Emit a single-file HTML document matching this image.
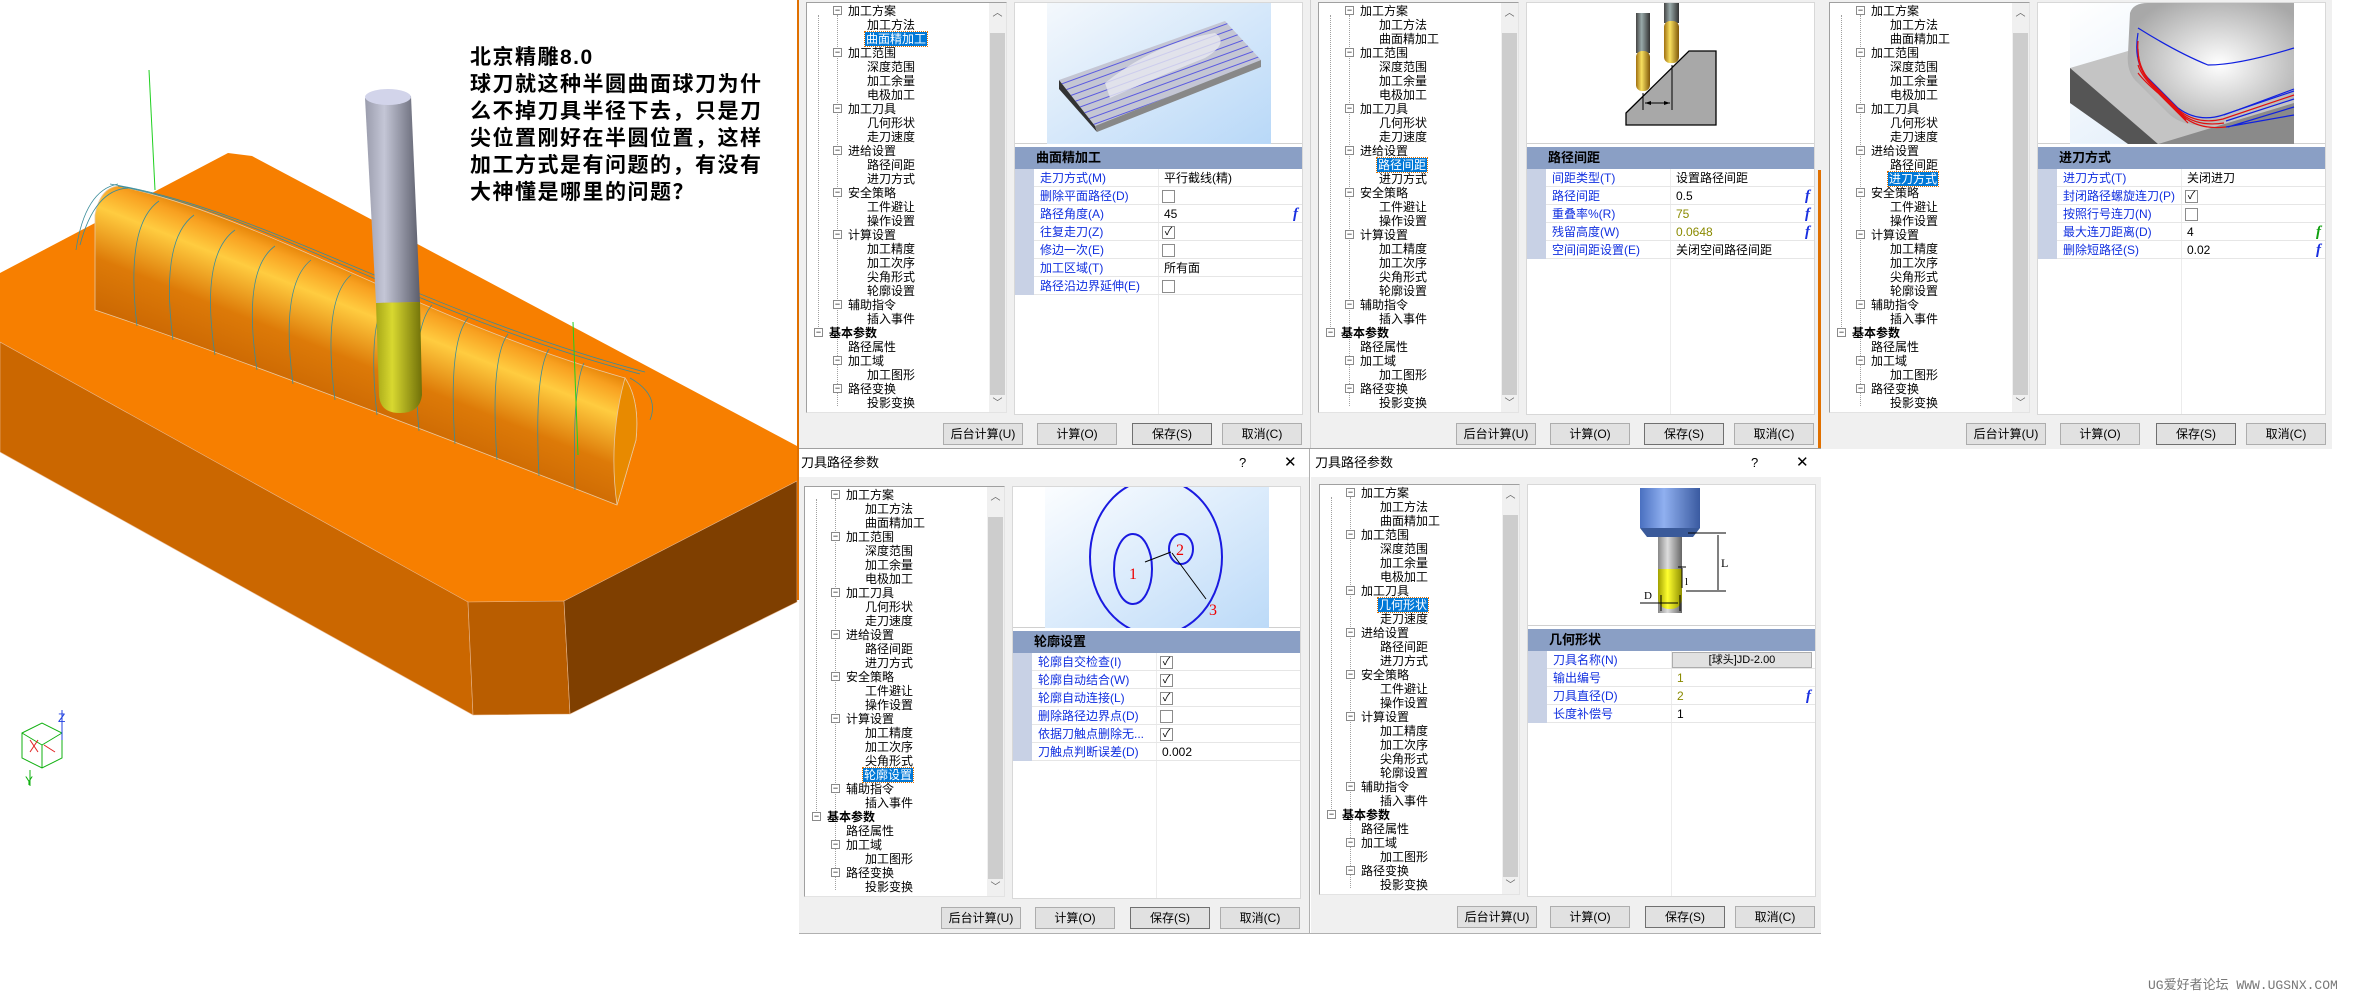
<!DOCTYPE html>
<html><head><meta charset="utf-8">
<style>
*{margin:0;padding:0;box-sizing:border-box}
body{width:2362px;height:993px;background:#fff;position:relative;overflow:hidden;font-family:"Liberation Sans","Noto Sans CJK SC","WenQuanYi Zen Hei",sans-serif;}
.abs{position:absolute}
.bg{position:absolute;background:#f0f0f0}
.dlg{position:absolute;width:512px;height:450px}
.tree{position:absolute;left:8px;top:2px;width:201px;height:411px;background:#fff;border:1px solid #a0a0a0;border-right-color:#e3e3e3;border-bottom-color:#e3e3e3;overflow:hidden;font-size:12px;line-height:14px;color:#000}
.tree .it{position:absolute;white-space:nowrap;height:14px}
.tree .bx{position:absolute;width:9px;height:9px;border:1px solid #8a8a8a;background:#fff;font-size:9px;line-height:7px;text-align:center;color:#000}
.tree .sel{background:#0078d7;color:#fff;outline:1px dotted #e07000;padding:0 1px}
.vl{position:absolute;border-left:1px dotted #a0a0a0}
.sb{position:absolute;right:0;top:0;width:17px;height:409px;background:#f0f0f0}
.sb .th{position:absolute;left:1px;top:30px;width:15px;height:362px;background:#cdcdcd}
.sb .ar{position:absolute;left:0;width:17px;text-align:center;font-size:10px;color:#606060}
.panel{position:absolute;left:216px;top:2px;width:289px;height:413px;background:#fff;border:1px solid #d8d8d8}
.img{position:absolute;left:0;top:0;width:287px;height:141px;border-bottom:1px solid #d0d0d0}
.hdr{position:absolute;left:0;top:144px;width:287px;height:22px;background:#8a9fc5;font-weight:bold;font-size:13px;line-height:22px;padding-left:21px;color:#000}
.gut{position:absolute;left:0;top:166px;width:19px;background:#c8d1e5}
.row{position:absolute;left:19px;width:268px;height:18px;border-bottom:1px solid #e6e6e6;font-size:12px;line-height:18px}
.row .l{position:absolute;left:6px;color:#1230e0;white-space:nowrap;overflow:hidden;width:118px}
.row .v{position:absolute;left:130px;color:#000;white-space:nowrap}
.vc{position:absolute;left:143px;top:166px;width:1px;height:245px;background:#ececec}
.cb{position:absolute;left:128px;top:3px;width:13px;height:13px;border:1px solid #8c8c8c;background:#fff;font-size:11px;line-height:11px;text-align:center}
.fx{position:absolute;right:4px;top:0;color:#1a30e0;font-style:italic;font-weight:bold;font-size:15px;font-family:"Liberation Serif",serif}
.btn{position:absolute;top:423px;width:80px;height:22px;background:#e1e1e1;border:1px solid #adadad;font-size:12px;line-height:20px;text-align:center;color:#000}
.title{position:absolute;height:28px;background:#fff;font-size:13px;line-height:28px}
</style></head><body>

<!-- 3D viewport -->
<svg class="abs" style="left:0;top:0" width="798" height="993" viewBox="0 0 798 993">
<defs>
<linearGradient id="rg" gradientUnits="userSpaceOnUse" x1="330" y1="430" x2="390" y2="280">
<stop offset="0" stop-color="#c46000"/><stop offset="0.45" stop-color="#dd7a08"/><stop offset="0.75" stop-color="#ffcc40"/><stop offset="0.9" stop-color="#f8a020"/><stop offset="1" stop-color="#e07c00"/></linearGradient>
<linearGradient id="tg" x1="0" x2="1"><stop offset="0" stop-color="#9a9cac"/><stop offset="0.35" stop-color="#c4c6d6"/><stop offset="1" stop-color="#5c5e6c"/></linearGradient>
<linearGradient id="yg" x1="0" x2="1"><stop offset="0" stop-color="#a8a818"/><stop offset="0.35" stop-color="#d8d830"/><stop offset="1" stop-color="#707008"/></linearGradient>
</defs>
<polygon points="0,273 228,153 252,156 797,446 797,481 564,601 468,602 0,342" fill="#f77f00"/>
<polygon points="0,342 468,602 473,715 0,452" fill="#cb6700" stroke="#e8b890" stroke-width="0.6"/>
<polygon points="468,602 564,601 570,714 473,715" fill="#b95d00" stroke="#e8b890" stroke-width="0.6"/>
<polygon points="564,601 797,481 797,602 570,714" fill="#7f3f00" stroke="#e8b890" stroke-width="0.6"/>
<path d="M95,310 L95,215 Q100,188 118,186 C260,215 420,320 625,378 Q640,400 636,440 L617,505 C400,420 200,345 95,310 Z" fill="url(#rg)" stroke="#e8c8a0" stroke-width="0.8"/>
<path d="M625,378 Q640,400 636,440 L617,505 Q608,440 625,378Z" fill="#e88a00" stroke="#e8c8a0" stroke-width="0.8"/>
<g fill="none" stroke="#3a8c9a" stroke-width="0.8">
<path d="M118,186 C260,212 420,316 640,374"/>
<path d="M110,184 C260,208 420,312 645,372"/>
<path d="M76,250 Q85,190 118,184"/><path d="M80,245 Q95,188 130,188"/>
<path d="M137,326 Q125,225 159,201"/><path d="M173,340 Q160,240 194,215"/>
<path d="M215,355 Q200,255 235,230"/><path d="M257,370 Q242,270 275,246"/>
<path d="M293,384 Q280,285 311,260"/><path d="M335,400 Q322,300 351,275"/>
<path d="M377,415 Q366,315 392,290"/><path d="M419,431 Q410,330 432,305"/>
<path d="M455,444 Q448,342 468,318"/><path d="M497,460 Q490,358 508,334"/>
<path d="M539,476 Q534,374 549,349"/><path d="M575,490 Q572,388 584,363"/>
<path d="M630,378 Q660,395 650,420"/>
</g>
<line x1="149" y1="70" x2="155" y2="190" stroke="#20d020" stroke-width="1"/>
<line x1="573" y1="322" x2="578" y2="455" stroke="#20d020" stroke-width="1"/>
<polygon points="365,98 411,96 420,302 376,303" fill="url(#tg)"/>
<ellipse cx="388" cy="97" rx="23" ry="8" fill="#d2d4ea"/>
<path d="M376,303 L420,302 L422,395 Q420,413 400,413 Q380,413 379,395 Z" fill="url(#yg)"/>
<g stroke="#10b010" fill="none" stroke-width="1"><polygon points="22,733 42,723 62,733 62,758 42,768 22,758"/><line x1="42" y1="745" x2="42" y2="768"/><line x1="22" y1="733" x2="42" y2="745"/><line x1="62" y1="733" x2="42" y2="745"/><line x1="30" y1="770" x2="30" y2="786"/></g>
<g stroke="#e02020" stroke-width="1"><line x1="30" y1="740" x2="38" y2="752"/><line x1="38" y1="740" x2="30" y2="752"/><line x1="44" y1="745" x2="55" y2="752"/></g>
<line x1="62" y1="710" x2="62" y2="740" stroke="#2040e0"/>
<text x="58" y="722" font-size="12" fill="#2040e0" font-family="Liberation Sans">Z</text>
<text x="25" y="785" font-size="12" fill="#10b010" font-family="Liberation Sans">Y</text>
</svg>
<div class="abs" style="left:470px;top:44px;font-size:21px;line-height:27px;font-weight:bold;letter-spacing:1.5px;color:#000;font-family:'Liberation Sans','Noto Sans CJK SC',sans-serif">北京精雕8.0<br>球刀就这种半圆曲面球刀为什<br>么不掉刀具半径下去，只是刀<br>尖位置刚好在半圆位置，这样<br>加工方式是有问题的，有没有<br>大神懂是哪里的问题？</div>
<div class="abs" style="left:797px;top:0;width:2px;height:600px;background:#e07000"></div>

<!-- backgrounds -->
<div class="bg" style="left:799px;top:0;width:1533px;height:449px"></div>
<div class="abs" style="left:1310px;top:0;width:1px;height:449px;background:#d0d0d0"></div>
<div class="abs" style="left:1818px;top:170px;width:3px;height:282px;background:#e07000"></div>
<div class="abs" style="left:799px;top:448px;width:1022px;height:1px;background:#a0a0a0"></div>
<div class="bg" style="left:799px;top:476px;width:510px;height:458px"></div>
<div class="bg" style="left:1311px;top:476px;width:510px;height:458px"></div>
<div class="title" style="left:799px;top:449px;width:510px;padding-left:2px">刀具路径参数<span class="abs" style="left:440px">?</span><span class="abs" style="left:485px;font-size:15px">✕</span></div>
<div class="title" style="left:1311px;top:449px;width:510px;padding-left:4px">刀具路径参数<span class="abs" style="left:440px">?</span><span class="abs" style="left:485px;font-size:15px">✕</span></div>
<div class="abs" style="left:1309px;top:449px;width:1px;height:485px;background:#b0b0b0"></div>
<div class="abs" style="left:799px;top:933px;width:1022px;height:1px;background:#b0b0b0"></div>

<!-- DIALOG TEMPLATE X5 -->
<!-- D1 -->
<div class="dlg" style="left:798px;top:0">
<div class="tree">
<div class="vl" style="left:30px;top:12px;height:310px"></div><div class="vl" style="left:11px;top:12px;height:320px"></div><div class="vl" style="left:30px;top:333px;height:70px"></div>
<div class="bx" style="left:26px;top:3px">−</div><div class="it" style="left:41px;top:1px">加工方案</div>
<div class="it" style="left:60px;top:15px">加工方法</div>
<div class="it sel" style="left:58px;top:29px">曲面精加工</div>
<div class="bx" style="left:26px;top:45px">−</div><div class="it" style="left:41px;top:43px">加工范围</div>
<div class="it" style="left:60px;top:57px">深度范围</div>
<div class="it" style="left:60px;top:71px">加工余量</div>
<div class="it" style="left:60px;top:85px">电极加工</div>
<div class="bx" style="left:26px;top:101px">−</div><div class="it" style="left:41px;top:99px">加工刀具</div>
<div class="it" style="left:60px;top:113px">几何形状</div>
<div class="it" style="left:60px;top:127px">走刀速度</div>
<div class="bx" style="left:26px;top:143px">−</div><div class="it" style="left:41px;top:141px">进给设置</div>
<div class="it" style="left:60px;top:155px">路径间距</div>
<div class="it" style="left:60px;top:169px">进刀方式</div>
<div class="bx" style="left:26px;top:185px">−</div><div class="it" style="left:41px;top:183px">安全策略</div>
<div class="it" style="left:60px;top:197px">工件避让</div>
<div class="it" style="left:60px;top:211px">操作设置</div>
<div class="bx" style="left:26px;top:227px">−</div><div class="it" style="left:41px;top:225px">计算设置</div>
<div class="it" style="left:60px;top:239px">加工精度</div>
<div class="it" style="left:60px;top:253px">加工次序</div>
<div class="it" style="left:60px;top:267px">尖角形式</div>
<div class="it" style="left:60px;top:281px">轮廓设置</div>
<div class="bx" style="left:26px;top:297px">−</div><div class="it" style="left:41px;top:295px">辅助指令</div>
<div class="it" style="left:60px;top:309px">插入事件</div>
<div class="bx" style="left:7px;top:325px">−</div><div class="it" style="left:22px;top:323px;font-weight:bold">基本参数</div>
<div class="it" style="left:41px;top:337px">路径属性</div>
<div class="bx" style="left:26px;top:353px">−</div><div class="it" style="left:41px;top:351px">加工域</div>
<div class="it" style="left:60px;top:365px">加工图形</div>
<div class="bx" style="left:26px;top:381px">−</div><div class="it" style="left:41px;top:379px">路径变换</div>
<div class="it" style="left:60px;top:393px">投影变换</div>
<div class="sb"><div class="ar" style="top:4px">︿</div><div class="th"></div><div class="ar" style="top:394px">﹀</div></div>
</div>
<div class="panel">
<div class="img"><svg width="287" height="141"><defs><linearGradient id="lb1" x1="0" y1="0" x2="1" y2="1"><stop offset="0" stop-color="#f4f8fc"/><stop offset="1" stop-color="#b8d8f8"/></linearGradient><pattern id="st" width="7" height="7" patternUnits="userSpaceOnUse" patternTransform="rotate(-20)"><rect width="7" height="7" fill="#c4c6d4"/><line x1="0" y1="1" x2="7" y2="1" stroke="#5a5ae0" stroke-width="1"/></pattern></defs><rect x="32" y="0" width="224" height="141" fill="url(#lb1)"/><polygon points="44,77 210,18 246,57 80,123" fill="url(#st)"/><polygon points="44,77 80,123 82,129 44,86" fill="#333"/><polygon points="80,123 246,57 246,64 82,129" fill="#888"/><path d="M90,80 Q140,40 200,30 Q215,40 190,55 Q140,75 95,95Z" fill="#e8e8f0" opacity="0.8"/></svg></div>
<div class="hdr">曲面精加工</div>
<div class="gut" style="height:126px"></div><div class="vc"></div>
<div class="row" style="top:166px"><span class="l">走刀方式(M)</span><span class="v">平行截线(精)</span></div>
<div class="row" style="top:184px"><span class="l">删除平面路径(D)</span><span class="cb"></span></div>
<div class="row" style="top:202px"><span class="l">路径角度(A)</span><span class="v">45</span><span class="fx">f</span></div>
<div class="row" style="top:220px"><span class="l">往复走刀(Z)</span><span class="cb">✓</span></div>
<div class="row" style="top:238px"><span class="l">修边一次(E)</span><span class="cb"></span></div>
<div class="row" style="top:256px"><span class="l">加工区域(T)</span><span class="v">所有面</span></div>
<div class="row" style="top:274px"><span class="l">路径沿边界延伸(E)</span><span class="cb"></span></div>
</div>
<div class="btn" style="left:145px">后台计算(U)</div><div class="btn" style="left:239px">计算(O)</div><div class="btn" style="left:334px;border-color:#707070">保存(S)</div><div class="btn" style="left:424px">取消(C)</div>
</div>

<!-- D2 -->
<div class="dlg" style="left:1310px;top:0">
<div class="tree">
<div class="vl" style="left:30px;top:12px;height:310px"></div><div class="vl" style="left:11px;top:12px;height:320px"></div><div class="vl" style="left:30px;top:333px;height:70px"></div>
<div class="bx" style="left:26px;top:3px">−</div><div class="it" style="left:41px;top:1px">加工方案</div>
<div class="it" style="left:60px;top:15px">加工方法</div>
<div class="it" style="left:60px;top:29px">曲面精加工</div>
<div class="bx" style="left:26px;top:45px">−</div><div class="it" style="left:41px;top:43px">加工范围</div>
<div class="it" style="left:60px;top:57px">深度范围</div>
<div class="it" style="left:60px;top:71px">加工余量</div>
<div class="it" style="left:60px;top:85px">电极加工</div>
<div class="bx" style="left:26px;top:101px">−</div><div class="it" style="left:41px;top:99px">加工刀具</div>
<div class="it" style="left:60px;top:113px">几何形状</div>
<div class="it" style="left:60px;top:127px">走刀速度</div>
<div class="bx" style="left:26px;top:143px">−</div><div class="it" style="left:41px;top:141px">进给设置</div>
<div class="it sel" style="left:58px;top:155px">路径间距</div>
<div class="it" style="left:60px;top:169px">进刀方式</div>
<div class="bx" style="left:26px;top:185px">−</div><div class="it" style="left:41px;top:183px">安全策略</div>
<div class="it" style="left:60px;top:197px">工件避让</div>
<div class="it" style="left:60px;top:211px">操作设置</div>
<div class="bx" style="left:26px;top:227px">−</div><div class="it" style="left:41px;top:225px">计算设置</div>
<div class="it" style="left:60px;top:239px">加工精度</div>
<div class="it" style="left:60px;top:253px">加工次序</div>
<div class="it" style="left:60px;top:267px">尖角形式</div>
<div class="it" style="left:60px;top:281px">轮廓设置</div>
<div class="bx" style="left:26px;top:297px">−</div><div class="it" style="left:41px;top:295px">辅助指令</div>
<div class="it" style="left:60px;top:309px">插入事件</div>
<div class="bx" style="left:7px;top:325px">−</div><div class="it" style="left:22px;top:323px;font-weight:bold">基本参数</div>
<div class="it" style="left:41px;top:337px">路径属性</div>
<div class="bx" style="left:26px;top:353px">−</div><div class="it" style="left:41px;top:351px">加工域</div>
<div class="it" style="left:60px;top:365px">加工图形</div>
<div class="bx" style="left:26px;top:381px">−</div><div class="it" style="left:41px;top:379px">路径变换</div>
<div class="it" style="left:60px;top:393px">投影变换</div>
<div class="sb"><div class="ar" style="top:4px">︿</div><div class="th"></div><div class="ar" style="top:394px">﹀</div></div>
</div>
<div class="panel">
<div class="img"><svg width="287" height="141"><defs><linearGradient id="em" x1="0" x2="1"><stop offset="0" stop-color="#444"/><stop offset="0.4" stop-color="#9aa"/><stop offset="1" stop-color="#333"/></linearGradient><linearGradient id="gd" x1="0" x2="1"><stop offset="0" stop-color="#a07010"/><stop offset="0.4" stop-color="#f8e060"/><stop offset="1" stop-color="#805808"/></linearGradient></defs><polygon points="99,110 162,48 189,48 189,122 99,122" fill="#a8a8a8" stroke="#000" stroke-width="1.3"/><rect x="109" y="10" width="14" height="40" fill="url(#em)"/><rect x="109" y="48" width="14" height="40" rx="6" fill="url(#gd)"/><rect x="137" y="-2" width="15" height="22" fill="url(#em)"/><rect x="137" y="18" width="15" height="42" rx="6" fill="url(#gd)"/><line x1="116" y1="90" x2="116" y2="107" stroke="#000"/><line x1="145" y1="62" x2="145" y2="107" stroke="#000"/><line x1="118" y1="100" x2="143" y2="100" stroke="#000"/><polygon points="118,100 124,98 124,102" fill="#000"/><polygon points="143,100 137,98 137,102" fill="#000"/></svg></div>
<div class="hdr">路径间距</div>
<div class="gut" style="height:90px"></div><div class="vc"></div>
<div class="row" style="top:166px"><span class="l">间距类型(T)</span><span class="v">设置路径间距</span></div>
<div class="row" style="top:184px"><span class="l">路径间距</span><span class="v">0.5</span><span class="fx">f</span></div>
<div class="row" style="top:202px"><span class="l">重叠率%(R)</span><span class="v" style="color:#8a8a00">75</span><span class="fx">f</span></div>
<div class="row" style="top:220px"><span class="l">残留高度(W)</span><span class="v" style="color:#8a8a00">0.0648</span><span class="fx">f</span></div>
<div class="row" style="top:238px"><span class="l">空间间距设置(E)</span><span class="v">关闭空间路径间距</span></div>
</div>
<div class="btn" style="left:146px">后台计算(U)</div><div class="btn" style="left:240px">计算(O)</div><div class="btn" style="left:334px;border-color:#707070">保存(S)</div><div class="btn" style="left:424px">取消(C)</div>
</div>

<!-- D3 -->
<div class="dlg" style="left:1821px;top:0">
<div class="tree">
<div class="vl" style="left:30px;top:12px;height:310px"></div><div class="vl" style="left:11px;top:12px;height:320px"></div><div class="vl" style="left:30px;top:333px;height:70px"></div>
<div class="bx" style="left:26px;top:3px">−</div><div class="it" style="left:41px;top:1px">加工方案</div>
<div class="it" style="left:60px;top:15px">加工方法</div>
<div class="it" style="left:60px;top:29px">曲面精加工</div>
<div class="bx" style="left:26px;top:45px">−</div><div class="it" style="left:41px;top:43px">加工范围</div>
<div class="it" style="left:60px;top:57px">深度范围</div>
<div class="it" style="left:60px;top:71px">加工余量</div>
<div class="it" style="left:60px;top:85px">电极加工</div>
<div class="bx" style="left:26px;top:101px">−</div><div class="it" style="left:41px;top:99px">加工刀具</div>
<div class="it" style="left:60px;top:113px">几何形状</div>
<div class="it" style="left:60px;top:127px">走刀速度</div>
<div class="bx" style="left:26px;top:143px">−</div><div class="it" style="left:41px;top:141px">进给设置</div>
<div class="it" style="left:60px;top:155px">路径间距</div>
<div class="it sel" style="left:58px;top:169px">进刀方式</div>
<div class="bx" style="left:26px;top:185px">−</div><div class="it" style="left:41px;top:183px">安全策略</div>
<div class="it" style="left:60px;top:197px">工件避让</div>
<div class="it" style="left:60px;top:211px">操作设置</div>
<div class="bx" style="left:26px;top:227px">−</div><div class="it" style="left:41px;top:225px">计算设置</div>
<div class="it" style="left:60px;top:239px">加工精度</div>
<div class="it" style="left:60px;top:253px">加工次序</div>
<div class="it" style="left:60px;top:267px">尖角形式</div>
<div class="it" style="left:60px;top:281px">轮廓设置</div>
<div class="bx" style="left:26px;top:297px">−</div><div class="it" style="left:41px;top:295px">辅助指令</div>
<div class="it" style="left:60px;top:309px">插入事件</div>
<div class="bx" style="left:7px;top:325px">−</div><div class="it" style="left:22px;top:323px;font-weight:bold">基本参数</div>
<div class="it" style="left:41px;top:337px">路径属性</div>
<div class="bx" style="left:26px;top:353px">−</div><div class="it" style="left:41px;top:351px">加工域</div>
<div class="it" style="left:60px;top:365px">加工图形</div>
<div class="bx" style="left:26px;top:381px">−</div><div class="it" style="left:41px;top:379px">路径变换</div>
<div class="it" style="left:60px;top:393px">投影变换</div>
<div class="sb"><div class="ar" style="top:4px">︿</div><div class="th"></div><div class="ar" style="top:394px">﹀</div></div>
</div>
<div class="panel">
<div class="img"><svg width="287" height="141"><defs><linearGradient id="lb3" x1="0" y1="0" x2="1" y2="1"><stop offset="0" stop-color="#ffffff"/><stop offset="1" stop-color="#d8e8f8"/></linearGradient><radialGradient id="bm" cx="0.55" cy="0.5" r="0.6"><stop offset="0" stop-color="#fff"/><stop offset="1" stop-color="#a8a8a8"/></radialGradient></defs><rect x="32" y="0" width="224" height="141" fill="url(#lb3)"/><polygon points="32,65 90,48 256,20 256,141 120,141 32,100" fill="#c4c4c4"/><polygon points="32,65 120,141 90,141 32,100" fill="#555"/><polygon points="120,141 256,100 256,141" fill="#8a8a8a"/><path d="M92,10 Q95,0 110,0 L256,0 L256,95 Q200,115 175,122 Q145,125 130,110 L100,80 Q88,70 90,50Z" fill="url(#bm)"/><g fill="none" stroke-width="1.2"><path d="M100,30 Q95,60 110,75 L140,105 Q160,120 185,112 L256,88" stroke="#1020e0"/><path d="M100,38 Q98,62 112,78 L142,108 Q160,122 185,116 L256,92" stroke="#e01010"/><path d="M100,46 Q100,66 114,81 L144,111 Q160,124 186,120" stroke="#e01010"/><path d="M100,54 Q102,70 116,84 L146,114 Q162,127 188,124" stroke="#e01010"/><path d="M100,62 Q104,74 118,87 L148,117" stroke="#e01010"/><path d="M100,70 Q106,78 120,90 L150,120" stroke="#e01010"/><path d="M186,112 L256,86 M188,118 L256,96 M190,124 L256,104 M188,124 L256,112" stroke="#1020e0"/><path d="M100,25 Q140,50 170,62 Q200,62 256,45" stroke="#1020e0"/></g></svg></div>
<div class="hdr">进刀方式</div>
<div class="gut" style="height:90px"></div><div class="vc"></div>
<div class="row" style="top:166px"><span class="l">进刀方式(T)</span><span class="v">关闭进刀</span></div>
<div class="row" style="top:184px"><span class="l">封闭路径螺旋连刀(P)</span><span class="cb">✓</span></div>
<div class="row" style="top:202px"><span class="l">按照行号连刀(N)</span><span class="cb"></span></div>
<div class="row" style="top:220px"><span class="l">最大连刀距离(D)</span><span class="v">4</span><span class="fx" style="color:#10a010">f</span></div>
<div class="row" style="top:238px"><span class="l">删除短路径(S)</span><span class="v">0.02</span><span class="fx">f</span></div>
</div>
<div class="btn" style="left:145px">后台计算(U)</div><div class="btn" style="left:239px">计算(O)</div><div class="btn" style="left:335px;border-color:#707070">保存(S)</div><div class="btn" style="left:425px">取消(C)</div>
</div>

<!-- D4 -->
<div class="dlg" style="left:796px;top:484px">
<div class="tree">
<div class="vl" style="left:30px;top:12px;height:310px"></div><div class="vl" style="left:11px;top:12px;height:320px"></div><div class="vl" style="left:30px;top:333px;height:70px"></div>
<div class="bx" style="left:26px;top:3px">−</div><div class="it" style="left:41px;top:1px">加工方案</div>
<div class="it" style="left:60px;top:15px">加工方法</div>
<div class="it" style="left:60px;top:29px">曲面精加工</div>
<div class="bx" style="left:26px;top:45px">−</div><div class="it" style="left:41px;top:43px">加工范围</div>
<div class="it" style="left:60px;top:57px">深度范围</div>
<div class="it" style="left:60px;top:71px">加工余量</div>
<div class="it" style="left:60px;top:85px">电极加工</div>
<div class="bx" style="left:26px;top:101px">−</div><div class="it" style="left:41px;top:99px">加工刀具</div>
<div class="it" style="left:60px;top:113px">几何形状</div>
<div class="it" style="left:60px;top:127px">走刀速度</div>
<div class="bx" style="left:26px;top:143px">−</div><div class="it" style="left:41px;top:141px">进给设置</div>
<div class="it" style="left:60px;top:155px">路径间距</div>
<div class="it" style="left:60px;top:169px">进刀方式</div>
<div class="bx" style="left:26px;top:185px">−</div><div class="it" style="left:41px;top:183px">安全策略</div>
<div class="it" style="left:60px;top:197px">工件避让</div>
<div class="it" style="left:60px;top:211px">操作设置</div>
<div class="bx" style="left:26px;top:227px">−</div><div class="it" style="left:41px;top:225px">计算设置</div>
<div class="it" style="left:60px;top:239px">加工精度</div>
<div class="it" style="left:60px;top:253px">加工次序</div>
<div class="it" style="left:60px;top:267px">尖角形式</div>
<div class="it sel" style="left:58px;top:281px">轮廓设置</div>
<div class="bx" style="left:26px;top:297px">−</div><div class="it" style="left:41px;top:295px">辅助指令</div>
<div class="it" style="left:60px;top:309px">插入事件</div>
<div class="bx" style="left:7px;top:325px">−</div><div class="it" style="left:22px;top:323px;font-weight:bold">基本参数</div>
<div class="it" style="left:41px;top:337px">路径属性</div>
<div class="bx" style="left:26px;top:353px">−</div><div class="it" style="left:41px;top:351px">加工域</div>
<div class="it" style="left:60px;top:365px">加工图形</div>
<div class="bx" style="left:26px;top:381px">−</div><div class="it" style="left:41px;top:379px">路径变换</div>
<div class="it" style="left:60px;top:393px">投影变换</div>
<div class="sb"><div class="ar" style="top:4px">︿</div><div class="th"></div><div class="ar" style="top:394px">﹀</div></div>
</div>
<div class="panel">
<div class="img"><svg width="287" height="141"><defs><linearGradient id="lb4" x1="0" y1="0" x2="1" y2="1"><stop offset="0" stop-color="#fbfdff"/><stop offset="1" stop-color="#bcdaf8"/></linearGradient></defs><rect x="32" y="0" width="224" height="141" fill="url(#lb4)"/><g fill="none" stroke="#1a1ae0" stroke-width="2"><ellipse cx="143" cy="70" rx="66" ry="78"/><ellipse cx="120" cy="82" rx="19" ry="35"/><ellipse cx="168" cy="62" rx="12" ry="15"/></g><line x1="132" y1="75" x2="158" y2="65" stroke="#000"/><line x1="159" y1="66" x2="193" y2="112" stroke="#000"/><text x="116" y="92" fill="#e00" font-size="16" font-family="Liberation Serif">1</text><text x="163" y="68" fill="#e00" font-size="16" font-family="Liberation Serif">2</text><text x="196" y="128" fill="#e00" font-size="16" font-family="Liberation Serif">3</text></svg></div>
<div class="hdr">轮廓设置</div>
<div class="gut" style="height:108px"></div><div class="vc"></div>
<div class="row" style="top:166px"><span class="l">轮廓自交检查(I)</span><span class="cb">✓</span></div>
<div class="row" style="top:184px"><span class="l">轮廓自动结合(W)</span><span class="cb">✓</span></div>
<div class="row" style="top:202px"><span class="l">轮廓自动连接(L)</span><span class="cb">✓</span></div>
<div class="row" style="top:220px"><span class="l">删除路径边界点(D)</span><span class="cb"></span></div>
<div class="row" style="top:238px"><span class="l">依据刀触点删除无...</span><span class="cb">✓</span></div>
<div class="row" style="top:256px"><span class="l">刀触点判断误差(D)</span><span class="v">0.002</span></div>
</div>
<div class="btn" style="left:145px">后台计算(U)</div><div class="btn" style="left:239px">计算(O)</div><div class="btn" style="left:334px;border-color:#707070">保存(S)</div><div class="btn" style="left:424px">取消(C)</div>
</div>

<!-- D5 -->
<div class="dlg" style="left:1311px;top:482px">
<div class="tree">
<div class="vl" style="left:30px;top:12px;height:310px"></div><div class="vl" style="left:11px;top:12px;height:320px"></div><div class="vl" style="left:30px;top:333px;height:70px"></div>
<div class="bx" style="left:26px;top:3px">−</div><div class="it" style="left:41px;top:1px">加工方案</div>
<div class="it" style="left:60px;top:15px">加工方法</div>
<div class="it" style="left:60px;top:29px">曲面精加工</div>
<div class="bx" style="left:26px;top:45px">−</div><div class="it" style="left:41px;top:43px">加工范围</div>
<div class="it" style="left:60px;top:57px">深度范围</div>
<div class="it" style="left:60px;top:71px">加工余量</div>
<div class="it" style="left:60px;top:85px">电极加工</div>
<div class="bx" style="left:26px;top:101px">−</div><div class="it" style="left:41px;top:99px">加工刀具</div>
<div class="it sel" style="left:58px;top:113px">几何形状</div>
<div class="it" style="left:60px;top:127px">走刀速度</div>
<div class="bx" style="left:26px;top:143px">−</div><div class="it" style="left:41px;top:141px">进给设置</div>
<div class="it" style="left:60px;top:155px">路径间距</div>
<div class="it" style="left:60px;top:169px">进刀方式</div>
<div class="bx" style="left:26px;top:185px">−</div><div class="it" style="left:41px;top:183px">安全策略</div>
<div class="it" style="left:60px;top:197px">工件避让</div>
<div class="it" style="left:60px;top:211px">操作设置</div>
<div class="bx" style="left:26px;top:227px">−</div><div class="it" style="left:41px;top:225px">计算设置</div>
<div class="it" style="left:60px;top:239px">加工精度</div>
<div class="it" style="left:60px;top:253px">加工次序</div>
<div class="it" style="left:60px;top:267px">尖角形式</div>
<div class="it" style="left:60px;top:281px">轮廓设置</div>
<div class="bx" style="left:26px;top:297px">−</div><div class="it" style="left:41px;top:295px">辅助指令</div>
<div class="it" style="left:60px;top:309px">插入事件</div>
<div class="bx" style="left:7px;top:325px">−</div><div class="it" style="left:22px;top:323px;font-weight:bold">基本参数</div>
<div class="it" style="left:41px;top:337px">路径属性</div>
<div class="bx" style="left:26px;top:353px">−</div><div class="it" style="left:41px;top:351px">加工域</div>
<div class="it" style="left:60px;top:365px">加工图形</div>
<div class="bx" style="left:26px;top:381px">−</div><div class="it" style="left:41px;top:379px">路径变换</div>
<div class="it" style="left:60px;top:393px">投影变换</div>
<div class="sb"><div class="ar" style="top:4px">︿</div><div class="th"></div><div class="ar" style="top:394px">﹀</div></div>
</div>
<div class="panel">
<div class="img" style="background:#fff"><svg width="287" height="141"><defs><linearGradient id="bl" x1="0" x2="1"><stop offset="0" stop-color="#4a70c0"/><stop offset="0.4" stop-color="#90b0f0"/><stop offset="1" stop-color="#3a5aa0"/></linearGradient><linearGradient id="sh" x1="0" x2="1"><stop offset="0" stop-color="#888"/><stop offset="0.4" stop-color="#ddd"/><stop offset="1" stop-color="#666"/></linearGradient><linearGradient id="yb" x1="0" x2="1"><stop offset="0" stop-color="#a0a000"/><stop offset="0.4" stop-color="#ffff30"/><stop offset="1" stop-color="#909000"/></linearGradient></defs><rect x="112" y="3" width="60" height="40" fill="url(#bl)"/><polygon points="112,43 172,43 165,52 119,52" fill="#3a5a9a"/><rect x="130" y="52" width="24" height="76" fill="url(#sh)"/><path d="M130,84 L154,84 L154,112 Q154,124 142,124 Q130,124 130,112Z" fill="url(#yb)"/><g stroke="#000" fill="none" stroke-width="1"><line x1="160" y1="48" x2="198" y2="48"/><line x1="158" y1="106" x2="198" y2="106"/><line x1="190" y1="50" x2="190" y2="105"/><line x1="150" y1="82" x2="158" y2="82"/><line x1="154" y1="83" x2="154" y2="103"/><line x1="112" y1="118" x2="150" y2="118"/><line x1="133" y1="110" x2="133" y2="126"/><line x1="152" y1="110" x2="152" y2="126"/></g><text x="193" y="82" font-size="12" font-family="Liberation Serif">L</text><text x="157" y="100" font-size="11" font-family="Liberation Serif">l</text><text x="116" y="114" font-size="11" font-family="Liberation Serif">D</text></svg></div>
<div class="hdr">几何形状</div>
<div class="gut" style="height:72px"></div><div class="vc"></div>
<div class="row" style="top:166px"><span class="l">刀具名称(N)</span><span class="abs" style="left:125px;top:1px;width:140px;height:16px;background:#e1e1e1;border:1px solid #adadad;text-align:center;line-height:14px;font-size:11px">[球头]JD-2.00</span></div>
<div class="row" style="top:184px"><span class="l">输出编号</span><span class="v" style="color:#8a8a00">1</span></div>
<div class="row" style="top:202px"><span class="l">刀具直径(D)</span><span class="v" style="color:#8a8a00">2</span><span class="fx">f</span></div>
<div class="row" style="top:220px"><span class="l">长度补偿号</span><span class="v">1</span></div>
</div>
<div class="btn" style="left:146px;top:424px">后台计算(U)</div><div class="btn" style="left:239px;top:424px">计算(O)</div><div class="btn" style="left:334px;top:424px;border-color:#707070">保存(S)</div><div class="btn" style="left:424px;top:424px">取消(C)</div>
</div>

<div class="abs" style="left:2148px;top:974px;font-size:13px;color:#777;white-space:nowrap;font-family:'Liberation Mono','Noto Sans CJK SC',monospace">UG爱好者论坛 WWW.UGSNX.COM</div>
</body></html>
